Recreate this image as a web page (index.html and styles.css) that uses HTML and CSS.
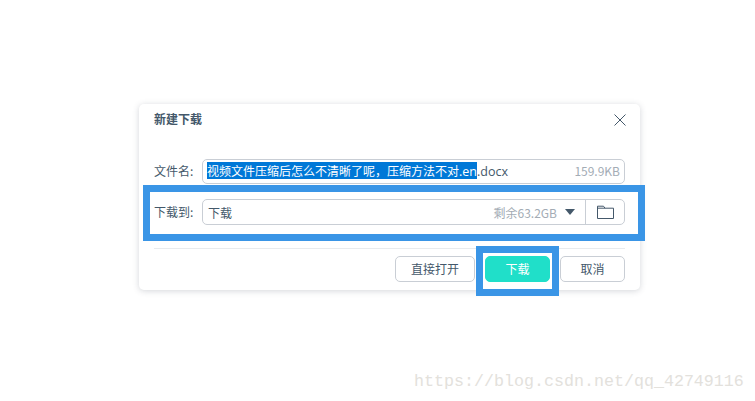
FILE: index.html
```html
<!DOCTYPE html>
<html lang="zh">
<head>
<meta charset="utf-8">
<title>新建下载</title>
<link rel="stylesheet" href="styles.css">
</head>
<body>
<div class="dialog">
  <div class="head">
    <span class="title">新建下载</span>
    <svg class="close" width="14" height="14" viewBox="0 0 14 14"><path d="M1.500 1.500l11 11M12.500 1.500l-11 11" fill="none" stroke="#44586a" stroke-width="1"/></svg>
  </div>
  <div class="row name-row">
    <span class="label">文件名:</span>
    <div class="field name-field">
      <span class="fname"><span class="sel">视频文件压缩后怎么不清晰了呢，压缩方法不对<span class="latin">.en</span></span><span class="latin">.docx</span></span>
      <span class="muted">159.9KB</span>
    </div>
  </div>
  <div class="row path-row">
    <span class="label">下载到:</span>
    <div class="field path-field">
      <div class="path-main">
        <span class="path">下载</span>
        <span class="muted free">剩余63.2GB</span>
        <span class="caret"></span>
      </div>
      <div class="folder">
        <svg width="17" height="14" viewBox="0 0 17 14"><path d="M.5 13.500V1.200h6l1.500 2h8.500v10.300zM.5 3.200h7.500" fill="none" stroke="#44586a" stroke-width="1"/></svg>
      </div>
    </div>
  </div>
  <div class="actions">
    <button class="btn open">直接打开</button>
    <button class="btn primary">下载</button>
    <button class="btn cancel">取消</button>
  </div>
</div>
<div class="mark mark-path"></div>
<div class="mark mark-btn"></div>
<div class="watermark">https://blog.csdn.net/qq_42749116</div>
</body>
</html>
```
FILE: styles.css
```css
html, body { margin: 0; height: 100%; background: #fff; overflow: hidden; }
body {
  position: relative;
  padding: 104px 0 0 139px;
  box-sizing: border-box;
  font-family: "Noto Sans CJK SC", "Liberation Sans", sans-serif;
  font-size: 12px;
  color: #44586a;
}
.dialog {
  width: 501px;
  height: 186px;
  box-sizing: border-box;
  padding: 0 15px;
  background: #fff;
  border-radius: 5px;
  box-shadow: 0 1px 6px rgba(60, 70, 85, .22);
}
.head { display: flex; justify-content: space-between; align-items: center; height: 31px; }
.title { font-weight: 700; padding-bottom: 2px; }
.close { margin-right: -2px; }
.row { display: flex; align-items: center; margin-top: 24px; }
.label { width: 48px; white-space: nowrap; padding-bottom: 2px; }
.field {
  width: 423px;
  box-sizing: border-box;
  background: #fff;
  border: 1px solid #c9ced5;
  border-radius: 5px;
  display: flex;
  align-items: center;
}
.name-field { height: 25px; padding: 0 4px; justify-content: space-between; }
.fname { white-space: nowrap; padding-bottom: 2px; }
.sel { background: #0078d7; color: #fff; }
.latin { font-family: "Open Sans", sans-serif; font-size: 12.500px; }
.muted { color: #a3acb5; white-space: nowrap; padding-bottom: 2px; }
.path-row { margin-top: 15px; }
.path-field { height: 26px; }
.path-main { flex: 1; display: flex; align-items: center; padding: 0 10px 0 5px; }
.path { flex: 1; }
.free { padding-bottom: 0; }
.caret {
  width: 0; height: 0; margin-left: 8px;
  border-left: 5px solid transparent;
  border-right: 5px solid transparent;
  border-top: 6px solid #44586a;
}
.folder { width: 38px; height: 24px; border-left: 1px solid #c9ced5; display: flex; align-items: center; justify-content: center; }
.actions {
  display: flex; justify-content: flex-end; gap: 10px;
  width: 471px; box-sizing: border-box;
  margin-top: 23px; padding-top: 7px;
  border-top: 1px solid #e8ebee;
}
.btn {
  height: 26px; padding: 0 0 2px;
  border: 1px solid #c9ced5; border-radius: 5px;
  background: #fff; color: #44586a;
  font: inherit;
}
.open { width: 80px; }
.primary { width: 65px; background: #20dfc9; border-color: #20dfc9; color: #fff; }
.cancel { width: 65px; }
.mark { position: absolute; box-sizing: border-box; border: 7px solid #3a95e6; }
.mark-path { left: 143px; top: 185px; width: 502px; height: 56px; }
.mark-btn { left: 476px; top: 246px; width: 83px; height: 50px; }
.watermark {
  position: absolute; left: 414px; top: 372px;
  font-family: "Liberation Mono", monospace; font-size: 16.670px;
  color: #e3e1dc; white-space: nowrap;
}
```
